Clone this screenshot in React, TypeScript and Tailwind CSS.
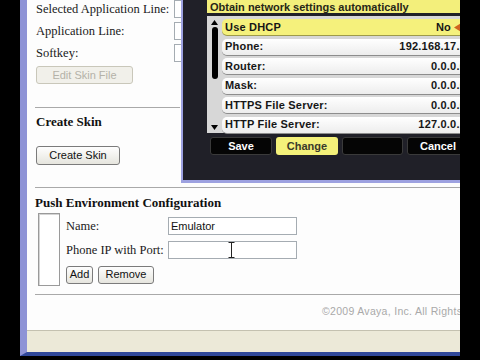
import type { ReactNode } from 'react'

const serif = "font-['Liberation_Serif','Times_New_Roman',serif]"
const sans = "font-['Liberation_Sans',Arial,sans-serif]"

type PhoneRow = {
  label: string
  value: string
  active?: boolean
}

const phoneRows: PhoneRow[] = [
  { label: 'Use DHCP', value: 'No', active: true },
  { label: 'Phone:', value: '192.168.17.1' },
  { label: 'Router:', value: '0.0.0.0' },
  { label: 'Mask:', value: '0.0.0.0' },
  { label: 'HTTPS File Server:', value: '0.0.0.0' },
  { label: 'HTTP File Server:', value: '127.0.0.1' },
]

function XpButton({ children, className = '', disabled = false }: { children: ReactNode; className?: string; disabled?: boolean }) {
  return (
    <button
      type="button"
      className={`${sans} flex items-center justify-center rounded-[3px] border text-[11px] leading-none ${
        disabled
          ? 'border-[#c9c7ba] bg-[#f1f0ea] text-[#b4b2a8]'
          : 'border-[#7b7b7b] bg-gradient-to-b from-[#fefefe] to-[#e6e5de] text-[#111]'
      } ${className}`}
    >
      {children}
    </button>
  )
}

function FormRow({ label }: { label: string }) {
  return (
    <div className="flex h-[22px] items-center">
      <span className="w-[138px] shrink-0 whitespace-nowrap text-[12.5px] text-[#1a1a1a]">{label}</span>
      <div className="h-[18px] w-[120px] shrink-0 border border-[#a5acb2] bg-white" />
    </div>
  )
}

function PhoneScreen() {
  return (
    <div className={`${sans} flex h-[183px] w-[290px] shrink-0 flex-col border-b-[3px] border-l-2 border-[#9da1e0] bg-[#202028] pl-[24px] pr-[4px]`}>
      <div className="flex h-[13px] items-end bg-[#f3ef7b] pl-[3px]">
        <span className="whitespace-nowrap text-[11px] font-bold leading-[12px] text-[#262617]">
          Obtain network settings automatically
        </span>
      </div>

      <div className="mt-[3px] flex h-[117px] bg-[#d7d7d7]">
        <div className="flex w-[15px] shrink-0 flex-col items-center pt-[4px]">
          <svg width="7" height="5" viewBox="0 0 7 5">
            <path d="M3.5 0L7 5H0z" fill="#000" />
          </svg>
          <div className="mt-[2px] h-[52px] w-[6px] rounded-full bg-black" />
          <div className="flex-1" />
          <svg width="7" height="5" viewBox="0 0 7 5" className="mb-[3px]">
            <path d="M0 0h7L3.5 5z" fill="#000" />
          </svg>
        </div>
        <div className="flex flex-1 flex-col gap-[3.5px] pt-[3px]">
          {phoneRows.map((row) => (
            <div
              key={row.label}
              className={`flex h-[16px] items-center rounded-l-[5px] pl-[3px] pr-[1px] text-[11px] font-bold tracking-[0.2px] text-[#161616] ${
                row.active
                  ? 'bg-[#f5f17c] shadow-[0_1px_0_#9d9a4a]'
                  : 'bg-gradient-to-b from-[#ffffff] to-[#ededed] shadow-[0_1px_0_#8d8d8d]'
              }`}
            >
              <span className="whitespace-nowrap">{row.label}</span>
              <span className="ml-auto whitespace-nowrap">{row.value}</span>
              {row.active && (
                <svg width="12" height="9" viewBox="0 0 12 9" className="ml-[3px]">
                  <path d="M0 4.5L7 0v9z" fill="#d0641e" />
                </svg>
              )}
            </div>
          ))}
        </div>
      </div>

      <div className="ml-[3px] mt-[4px] flex gap-[4px] text-[11px] font-bold">
        <div className="flex h-[18px] w-[62px] shrink-0 items-center justify-center rounded-[3px] border border-[#3a3a3a] bg-[#050505] text-white">
          Save
        </div>
        <div className="flex h-[18px] w-[62px] shrink-0 items-center justify-center rounded-[3px] bg-[#f4f17a] text-[#3a3a2a]">
          Change
        </div>
        <div className="h-[18px] w-[61px] shrink-0 rounded-[3px] border border-[#3a3a3a] bg-[#050505]" />
        <div className="flex h-[18px] w-[62px] shrink-0 items-center justify-center rounded-[3px] border border-[#3a3a3a] bg-[#050505] text-white">
          Cancel
        </div>
      </div>
    </div>
  )
}

export default function App() {
  return (
    <div className="flex h-[360px] w-[480px] overflow-hidden bg-black pb-[4px] pl-[20px] pr-[20px]">
      <div className="flex min-w-0 flex-1 flex-col border-b-[4px] border-l-[7px] border-b-[#30489a] border-l-[#8e93d6]">
        <div className={`${serif} flex min-h-0 flex-1 flex-col overflow-hidden bg-[#fdfdfd]`}>
          <div className="flex shrink-0">
            <div className="w-[154px] shrink-0 overflow-hidden pl-[9px]">
              <div className="-mt-[2px]">
                <FormRow label="Selected Application Line:" />
                <FormRow label="Application Line:" />
                <FormRow label="Softkey:" />
              </div>
              <XpButton disabled className="mt-[2px] h-[18px] w-[97px]">
                Edit Skin File
              </XpButton>
              <div className="ml-[-1px] mr-[1px] mt-[23px] border-t border-[#a9a9a9]" />
              <h2 className="mt-[6px] text-[13px] font-bold leading-[16px] text-[#111]">Create Skin</h2>
              <XpButton className="mt-[16px] h-[19px] w-[84px]">Create Skin</XpButton>
            </div>
            <PhoneScreen />
          </div>

          <div className="ml-[8px] mt-[4px] border-t border-[#a9a9a9]" />
          <h2 className="ml-[8px] mt-[7px] whitespace-nowrap text-[13px] font-bold leading-[16px] text-[#111]">
            Push Environment Configuration
          </h2>
          <div className="ml-[11px] mt-[2px] flex">
            <div className="h-[73px] w-[22px] shrink-0 border border-[#9a9a9a] bg-white shadow-[inset_1px_1px_0_#d4d4d4]" />
            <div className="ml-[6px] pt-[4px]">
              <div className="flex items-center">
                <span className="w-[102px] shrink-0 text-[12.5px] text-[#1a1a1a]">Name:</span>
                <div className={`${sans} flex h-[18px] w-[129px] items-center border border-[#a5acb2] bg-white pl-[2px] text-[11px] text-[#111]`}>
                  Emulator
                </div>
              </div>
              <div className="mt-[5px] flex items-center">
                <span className="w-[102px] shrink-0 whitespace-nowrap text-[12.5px] text-[#1a1a1a]">Phone IP with Port:</span>
                <div className="relative h-[18px] w-[129px] border border-[#a5acb2] bg-white">
                  <svg width="7" height="16" viewBox="0 0 7 16" className="absolute left-[59px] top-0">
                    <path d="M0.5 0.5h6M3.5 0.5v15M0.5 15.5h6" stroke="#222" strokeWidth="1" fill="none" />
                  </svg>
                </div>
              </div>
              <div className="mt-[6px] flex gap-[5px]">
                <XpButton className="h-[18px] w-[27px]">Add</XpButton>
                <XpButton className="h-[18px] w-[56px]">Remove</XpButton>
              </div>
            </div>
          </div>

          <div className="ml-[8px] mt-[8px] border-t border-[#a9a9a9]" />
          <p className={`${sans} ml-[295px] mt-[10px] whitespace-nowrap text-[10.5px] leading-[12px] tracking-[0.3px] text-[#a9a9a9]`}>
            ©2009 Avaya, Inc. All Rights Reserved.
          </p>
        </div>
        <div className="h-[22px] shrink-0 border-t border-[#c4c1b0] bg-[#ece9d8]" />
      </div>
    </div>
  )
}
